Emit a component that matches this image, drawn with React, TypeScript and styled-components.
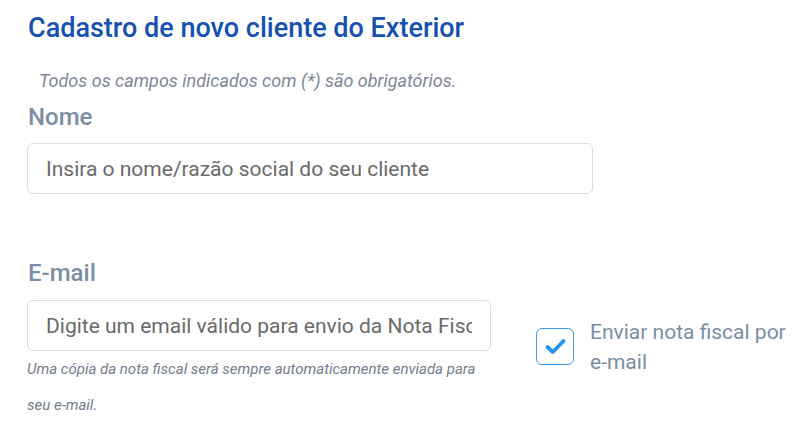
import React from "react";
import styled, { createGlobalStyle } from "styled-components";

const Global = createGlobalStyle`
  html, body { margin: 0; padding: 0; background: #fff; }
  body { font-family: Roboto, "Noto Sans", Arial, sans-serif; }
  * { box-sizing: border-box; }
`;

const Page = styled.div`
  padding: 12px 0 0 27px;
  width: 798px;
  height: 435px;
  overflow: hidden;
`;

const Title = styled.h1`
  margin: 0 0 0 1px;
  font-size: 27px;
  font-weight: 500;
  line-height: 32px;
  color: #1551b0;
`;

const Note = styled.p`
  margin: 26px 0 0 12px;
  font-size: 18px;
  font-style: italic;
  line-height: 22px;
  color: #7d8797;
`;

const Label = styled.label<{ $top: number }>`
  display: block;
  margin: ${(p) => p.$top}px 0 0 1px;
  font-size: 24px;
  font-weight: 500;
  line-height: 28px;
  color: #7a8ea6;
`;

const Input = styled.input<{ $w: number }>`
  display: block;
  width: ${(p) => p.$w}px;
  height: 51px;
  margin-top: 12px;
  padding: 0 18px;
  border: 1px solid #d3dfea;
  border-radius: 6px;
  font-family: Roboto, sans-serif;
  font-size: 21px;
  color: #555;
  outline: none;
  &::placeholder { color: #6a6a6a; opacity: 1; }
`;

const Row = styled.div`
  display: flex;
  align-items: flex-start;
  margin-top: 1px;
`;

const FieldCol = styled.div`
  display: flex;
  flex-direction: column;
`;

const Help = styled.p`
  margin: 0;
  width: 460px;
  font-size: 15px;
  font-style: italic;
  line-height: 36px;
  color: #737d8c;
`;

const CheckWrap = styled.label`
  display: flex;
  align-items: flex-start;
  gap: 16px;
  margin: 29px 0 0 45px;
`;

const Box = styled.span`
  flex: none;
  width: 38px;
  height: 37px;
  margin-top: 11px;
  border: 1.5px solid #3a9af0;
  border-radius: 6px;
  display: flex;
  align-items: center;
  justify-content: center;
`;

const CheckText = styled.span`
  font-size: 21px;
  line-height: 30px;
  color: #7a8ea6;
  width: 205px;
`;

export default function App() {
  return (
    <>
      <Global />
      <Page>
        <Title>Cadastro de novo cliente do Exterior</Title>
        <Note>Todos os campos indicados com (*) são obrigatórios.</Note>
        <Label $top={11}>Nome</Label>
        <Input $w={566} placeholder="Insira o nome/razão social do seu cliente" />
        <Label $top={65}>E-mail</Label>
        <Row>
          <FieldCol>
            <Input $w={464} placeholder="Digite um email válido para envio da Nota Fiscal" />
            <Help>Uma cópia da nota fiscal será sempre automaticamente enviada para seu e-mail.</Help>
          </FieldCol>
          <CheckWrap>
            <Box>
              <svg width="21" height="17" viewBox="0 0 21 17">
                <path d="M2.5 9 L7.8 14 L18.5 3" fill="none" stroke="#2196f3" strokeWidth="3.8" strokeLinecap="round" strokeLinejoin="round" />
              </svg>
            </Box>
            <CheckText>Enviar nota fiscal por e-mail</CheckText>
          </CheckWrap>
        </Row>
      </Page>
    </>
  );
}
